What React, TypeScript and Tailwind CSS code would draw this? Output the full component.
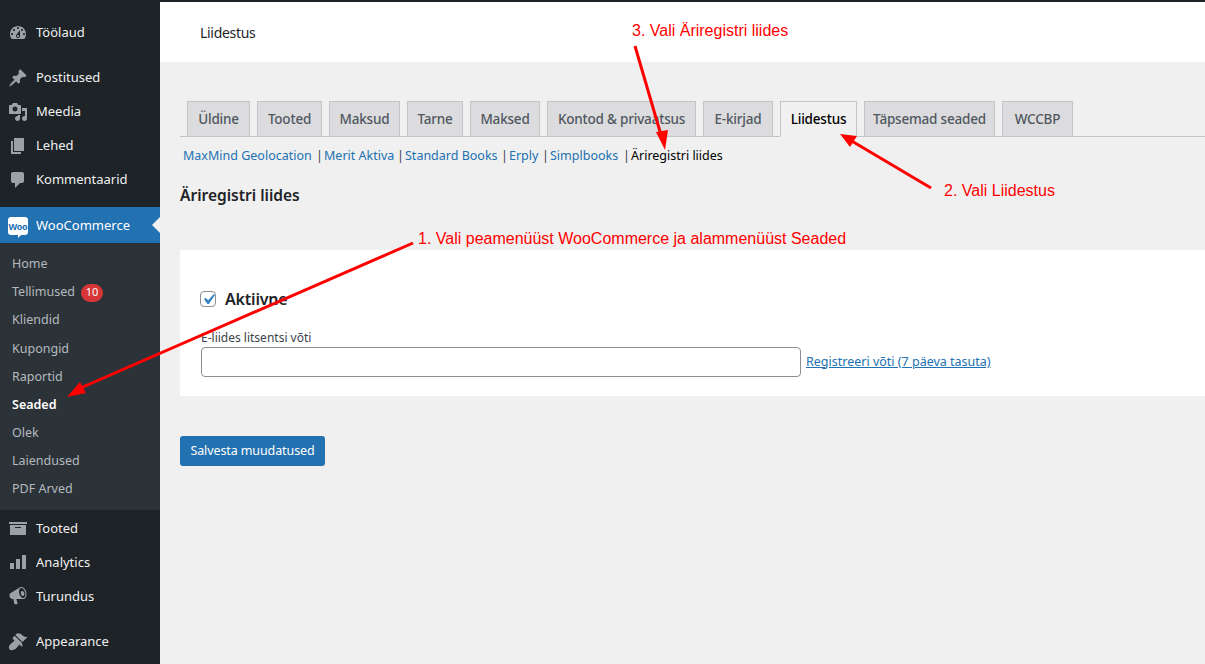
import type { ReactNode } from "react";

const Dash = ({ d, className = "" }: { d: string; className?: string }) => (
  <svg viewBox="0 0 20 20" className={`w-5 h-5 fill-[#9ca1a7] ${className}`}>
    <path d={d} />
  </svg>
);

const icons = {
  dashboard:
    "M3.76 16h12.48c1.1-1.37 1.76-3.11 1.76-5 0-4.42-3.58-8-8-8s-8 3.58-8 8c0 1.89.66 3.63 1.76 5zM10 4c.55 0 1 .45 1 1s-.45 1-1 1-1-.45-1-1 .45-1 1-1zM6 6c.55 0 1 .45 1 1s-.45 1-1 1-1-.45-1-1 .45-1 1-1zm8 0c.55 0 1 .45 1 1s-.45 1-1 1-1-.45-1-1 .45-1 1-1zm-5.37 5.55L12 7v6c0 1.1-.9 2-2 2s-2-.9-2-2c0-.57.24-1.08.63-1.45zM4 10c.55 0 1 .45 1 1s-.45 1-1 1-1-.45-1-1 .45-1 1-1zm12 0c.55 0 1 .45 1 1s-.45 1-1 1-1-.45-1-1 .45-1 1-1zm-5 3c0-.55-.45-1-1-1s-1 .45-1 1 .45 1 1 1 1-.45 1-1z",
  post: "M10.44 3.02l1.82-1.82 6.36 6.35-1.83 1.82c-1.05-.68-2.48-.57-3.41.36l-.75.75c-.92.93-1.04 2.35-.35 3.41l-1.83 1.82-2.41-2.41-2.8 2.79c-.42.42-3.38 2.71-3.8 2.29s1.86-3.39 2.28-3.81l2.79-2.79L4.1 9.36l1.83-1.82c1.05.69 2.48.57 3.4-.36l.75-.75c.93-.92 1.05-2.35.36-3.41z",
  media:
    "M13 11V4c0-.55-.45-1-1-1h-1.67L9 1H5L3.67 3H2c-.55 0-1 .45-1 1v7c0 .55.45 1 1 1h10c.55 0 1-.45 1-1zM7 4.5c1.38 0 2.5 1.12 2.5 2.5S8.38 9.5 7 9.5 4.5 8.38 4.5 7 5.62 4.5 7 4.5zM14 6h5v10.5c0 1.38-1.12 2.5-2.5 2.5S14 17.88 14 16.5s1.12-2.5 2.5-2.5c.17 0 .34.02.5.05V9h-3V6zm-4 8.05V13h2v3.5c0 1.38-1.12 2.5-2.5 2.5S7 17.88 7 16.5 8.12 14 9.5 14c.17 0 .34.02.5.05z",
  page: "M6 15V2h10v13H6zm-1 1h8v2H3V5h2v11z",
  comments:
    "M5 2h9c1.1 0 2 .9 2 2v7c0 1.1-.9 2-2 2h-2l-5 5v-5H5c-1.1 0-2-.9-2-2V4c0-1.1.9-2 2-2z",
  archive: "M19 4v2H1V4h18zM2 7h16v10H2V7zm11 3V9H7v1h6z",
  chart: "M18 3v14h-4V3h4zm-6 4v10H8V7h4zm-6 4v6H2v-6h4z",
  megaphone:
    "M18.15 5.94c.46 1.62.38 3.22-.02 4.48-.42 1.28-1.26 2.18-2.3 2.48-.16.06-.26.06-.4.06h-.4H8.3l1.3 4.6c.1.4-.2.74-.6.74H6.9c-.3 0-.55-.2-.6-.5L5.4 12.9H4.25c-.5.06-1.08-.18-1.54-.62s-.88-1.08-1.06-1.88c-.24-.8-.2-1.56-.02-2.2.18-.62.58-1.08 1.06-1.3l9-5.42c.3-.2.48-.3.98-.46 1.04-.3 2.24.1 3.22.98.98.86 1.82 2.2 2.26 3.84zm-2.6 5.98c.4-.1.74-.34 1.04-.7.58-.7.86-1.76.86-3.04-.02-.64-.1-1.3-.28-1.98-.34-1.36-1.02-2.5-1.78-3.24s-1.68-1.1-2.46-.88c-.82.22-1.4.96-1.7 2-.32 1.04-.28 2.36.06 3.72.38 1.36 1 2.5 1.8 3.24.78.74 1.62 1.1 2.46.88zm-1.6-6.9c.9-.24 1.9.7 2.26 2.1.36 1.4-.06 2.7-.96 2.94-.9.24-1.9-.7-2.26-2.1-.36-1.4.06-2.7.96-2.94z",
  appearance:
    "M14.48 11.06L7.41 3.99l1.5-1.5c.5-.56 2.3-.47 3.51.32 1.21.8 1.43 1.28 2.91 2.1 1.18.64 2.45 1.26 4.45.85zm-.71.71L6.7 4.7 4.93 6.47c-.39.39-.39 1.02 0 1.41l1.06 1.06c.39.39.39 1.03 0 1.42-.6.6-1.43 1.11-2.21 1.69-.35.26-.7.53-1.01.84C1.43 13.23 0 16.99 1.57 18.56s5.33.14 6.69-1.21c.31-.31.58-.66.84-1.01.58-.78 1.09-1.61 1.69-2.21.39-.39 1.02-.39 1.41 0l1.06 1.06c.39.39 1.02.39 1.41 0z",
};

const MenuItem = ({ icon, label }: { icon: string; label: string }) => (
  <div className="flex items-center h-[34px] pl-[8px] pt-[2px] text-[13px] text-[#f0f0f1]">
    <Dash d={icon} />
    <span className="ml-[8px]">{label}</span>
  </div>
);

const SubItem = ({ children, active }: { children: ReactNode; active?: boolean }) => (
  <div
    className={`flex items-center h-[28.15px] pl-3 text-[12.5px] ${
      active ? "font-semibold text-white" : "text-[#b4b9be]"
    }`}
  >
    {children}
  </div>
);

const WooIcon = () => (
  <div className="relative w-[20px] h-[18px] rounded-[3px] bg-white flex items-center justify-center ml-[-1px] mr-[1px]">
    <span className="text-[9px] leading-none font-bold tracking-[-0.3px] text-[#2271b1]">Woo</span>
    <span className="absolute left-[10px] bottom-[-3px] w-0 h-0 border-t-[3px] border-t-white border-r-[3px] border-r-transparent" />
  </div>
);

const Sidebar = () => (
  <aside className="w-[160px] shrink-0 bg-[#1d2327] pt-[13px]">
    <MenuItem icon={icons.dashboard} label="Töölaud" />
    <div className="mt-[11px]">
      <MenuItem icon={icons.post} label="Postitused" />
      <MenuItem icon={icons.media} label="Meedia" />
      <MenuItem icon={icons.page} label="Lehed" />
      <MenuItem icon={icons.comments} label="Kommentaarid" />
    </div>
    <div className="relative mt-[11px] flex items-center h-[36px] pl-[9px] pt-[2px] bg-[#2271b1] text-[13px] text-white">
      <WooIcon />
      <span className="ml-[7px]">WooCommerce</span>
      <span className="absolute right-0 top-[10px] w-0 h-0 border-y-[8px] border-y-transparent border-r-[8px] border-r-[#f0f0f0]" />
    </div>
    <div className="bg-[#2c3338] pt-[7.4px] pb-[6.6px]">
      <SubItem>Home</SubItem>
      <SubItem>
        Tellimused
        <span className="ml-[6px] flex items-center justify-center w-[22px] h-[18px] rounded-full bg-[#d63638] text-[11px] text-white">
          10
        </span>
      </SubItem>
      <SubItem>Kliendid</SubItem>
      <SubItem>Kupongid</SubItem>
      <SubItem>Raportid</SubItem>
      <SubItem active>Seaded</SubItem>
      <SubItem>Olek</SubItem>
      <SubItem>Laiendused</SubItem>
      <SubItem>PDF Arved</SubItem>
    </div>
    <div>
      <MenuItem icon={icons.archive} label="Tooted" />
      <MenuItem icon={icons.chart} label="Analytics" />
      <MenuItem icon={icons.megaphone} label="Turundus" />
    </div>
    <div className="mt-[11px]">
      <MenuItem icon={icons.appearance} label="Appearance" />
    </div>
  </aside>
);

const tabs = [
  { label: "Üldine", w: "w-[63px]" },
  { label: "Tooted", w: "w-[65px]" },
  { label: "Maksud", w: "w-[71px]" },
  { label: "Tarne", w: "w-[56px]" },
  { label: "Maksed", w: "w-[70px]" },
  { label: "Kontod & privaatsus", w: "w-[149px]" },
  { label: "E-kirjad", w: "w-[70px]" },
  { label: "Liidestus", w: "w-[77px]", active: true },
  { label: "Täpsemad seaded", w: "w-[131px]" },
  { label: "WCCBP", w: "w-[71px]" },
];

const subLinks = [
  { label: "MaxMind Geolocation", w: "w-[141px]" },
  { label: "Merit Aktiva", w: "w-[81px]" },
  { label: "Standard Books", w: "w-[104px]" },
  { label: "Erply", w: "w-[41px]" },
  { label: "Simplbooks", w: "w-[81px]" },
];

// punased juhised ekraanipildi peal
const Annotations = () => (
  <>
    <svg className="absolute inset-0 w-[1205px] h-[664px] pointer-events-none" viewBox="0 0 1205 664">
      <g stroke="#ff0000" strokeWidth="3" fill="none">
        <line x1="413" y1="243" x2="76" y2="390" />
        <line x1="931" y1="188" x2="850" y2="140" />
        <line x1="635" y1="46" x2="661" y2="135" />
      </g>
      <g fill="#ff0000">
        <polygon points="67,397 80,382 86,393" />
        <polygon points="840,134 857,136 850,147" />
        <polygon points="665,150 656,132 668,130" />
      </g>
    </svg>
    <span className="absolute left-[418px] top-[230px] text-base leading-[18px] text-[#ff0000] font-['Liberation_Sans',sans-serif]">
      1. Vali peamenüüst WooCommerce ja alammenüüst Seaded
    </span>
    <span className="absolute left-[944px] top-[182px] text-base leading-[18px] text-[#ff0000] font-['Liberation_Sans',sans-serif]">
      2. Vali Liidestus
    </span>
    <span className="absolute left-[632px] top-[22px] text-base leading-[18px] text-[#ff0000] font-['Liberation_Sans',sans-serif]">
      3. Vali Äriregistri liides
    </span>
  </>
);

export default function App() {
  return (
    <div className="relative w-[1205px] h-[664px] overflow-hidden bg-[#f0f0f0] font-['Noto_Sans',sans-serif] text-[#3c434a]">
      <div className="h-[2px] bg-[#1d2327]" />
      <div className="flex h-[662px]">
        <Sidebar />
        <main className="flex-1 min-w-0">
          <header className="h-[60px] bg-white flex items-center pl-[40px] pt-[2px] text-sm tracking-[-0.3px] text-[#1d2327]">
            Liidestus
          </header>

          <div className="pl-[20px] pt-[39px]">
            <div className="flex h-[36px] pl-[7px] gap-[7px] border-b border-[#c3c4c7]">
              {tabs.map((t) => (
                <div
                  key={t.label}
                  className={`${t.w} h-[36px] shrink-0 flex items-center justify-center border border-[#c3c4c7] text-[13.5px] font-medium tracking-[-0.2px] ${
                    t.active ? "bg-[#f0f0f0] border-b-[#f0f0f0] text-black" : "bg-[#dcdcde] text-[#50575e]"
                  }`}
                >
                  {t.label}
                </div>
              ))}
            </div>

            <div className="flex items-center h-[18px] mt-[10px] pl-[3px] text-[12.5px]">
              {subLinks.map((l) => (
                <span key={l.label} className={`${l.w} shrink-0 flex justify-between pr-[1px]`}>
                  <span className="text-[#2271b1] whitespace-nowrap">{l.label}</span>
                  <span className="text-[#3c434a]">|</span>
                </span>
              ))}
              <span className="text-black whitespace-nowrap">Äriregistri liides</span>
            </div>

            <h2 className="mt-[18px] text-[15.5px] leading-[24px] font-semibold text-[#1d2327]">Äriregistri liides</h2>

            <section className="mt-[43px] h-[146px] bg-white pl-[20px] pt-[39px]">
              <div className="flex items-center h-[20px]">
                <span className="w-4 h-4 flex items-center justify-center rounded border border-[#8c8f94] bg-white">
                  <svg viewBox="0 0 20 20" className="w-[21px] h-[21px] shrink-0 fill-[#3582c4]">
                    <path d="M14.83 4.89l1.34.94-5.81 8.38H9.02L5.78 9.67l1.34-1.25 2.57 2.4z" />
                  </svg>
                </span>
                <span className="ml-[9px] text-base font-semibold tracking-[-0.2px] text-[#1d2327]">Aktiivne</span>
              </div>
              <div className="mt-[20px] pl-px text-[12px] leading-[18px]">E-liides litsentsi võti</div>
              <div className="flex items-center pl-px">
                <div className="w-[600px] h-[30px] bg-white border border-[#8c8f94] rounded" />
                <a className="ml-[5px] text-[12.5px] text-[#2271b1] underline">Registreeri võti (7 päeva tasuta)</a>
              </div>
            </section>

            <button className="mt-[40px] w-[145px] h-[30px] pt-px rounded-[3px] bg-[#2271b1] text-[12.5px] tracking-[-0.1px] text-white">
              Salvesta muudatused
            </button>
          </div>
        </main>
      </div>
      <Annotations />
    </div>
  );
}
